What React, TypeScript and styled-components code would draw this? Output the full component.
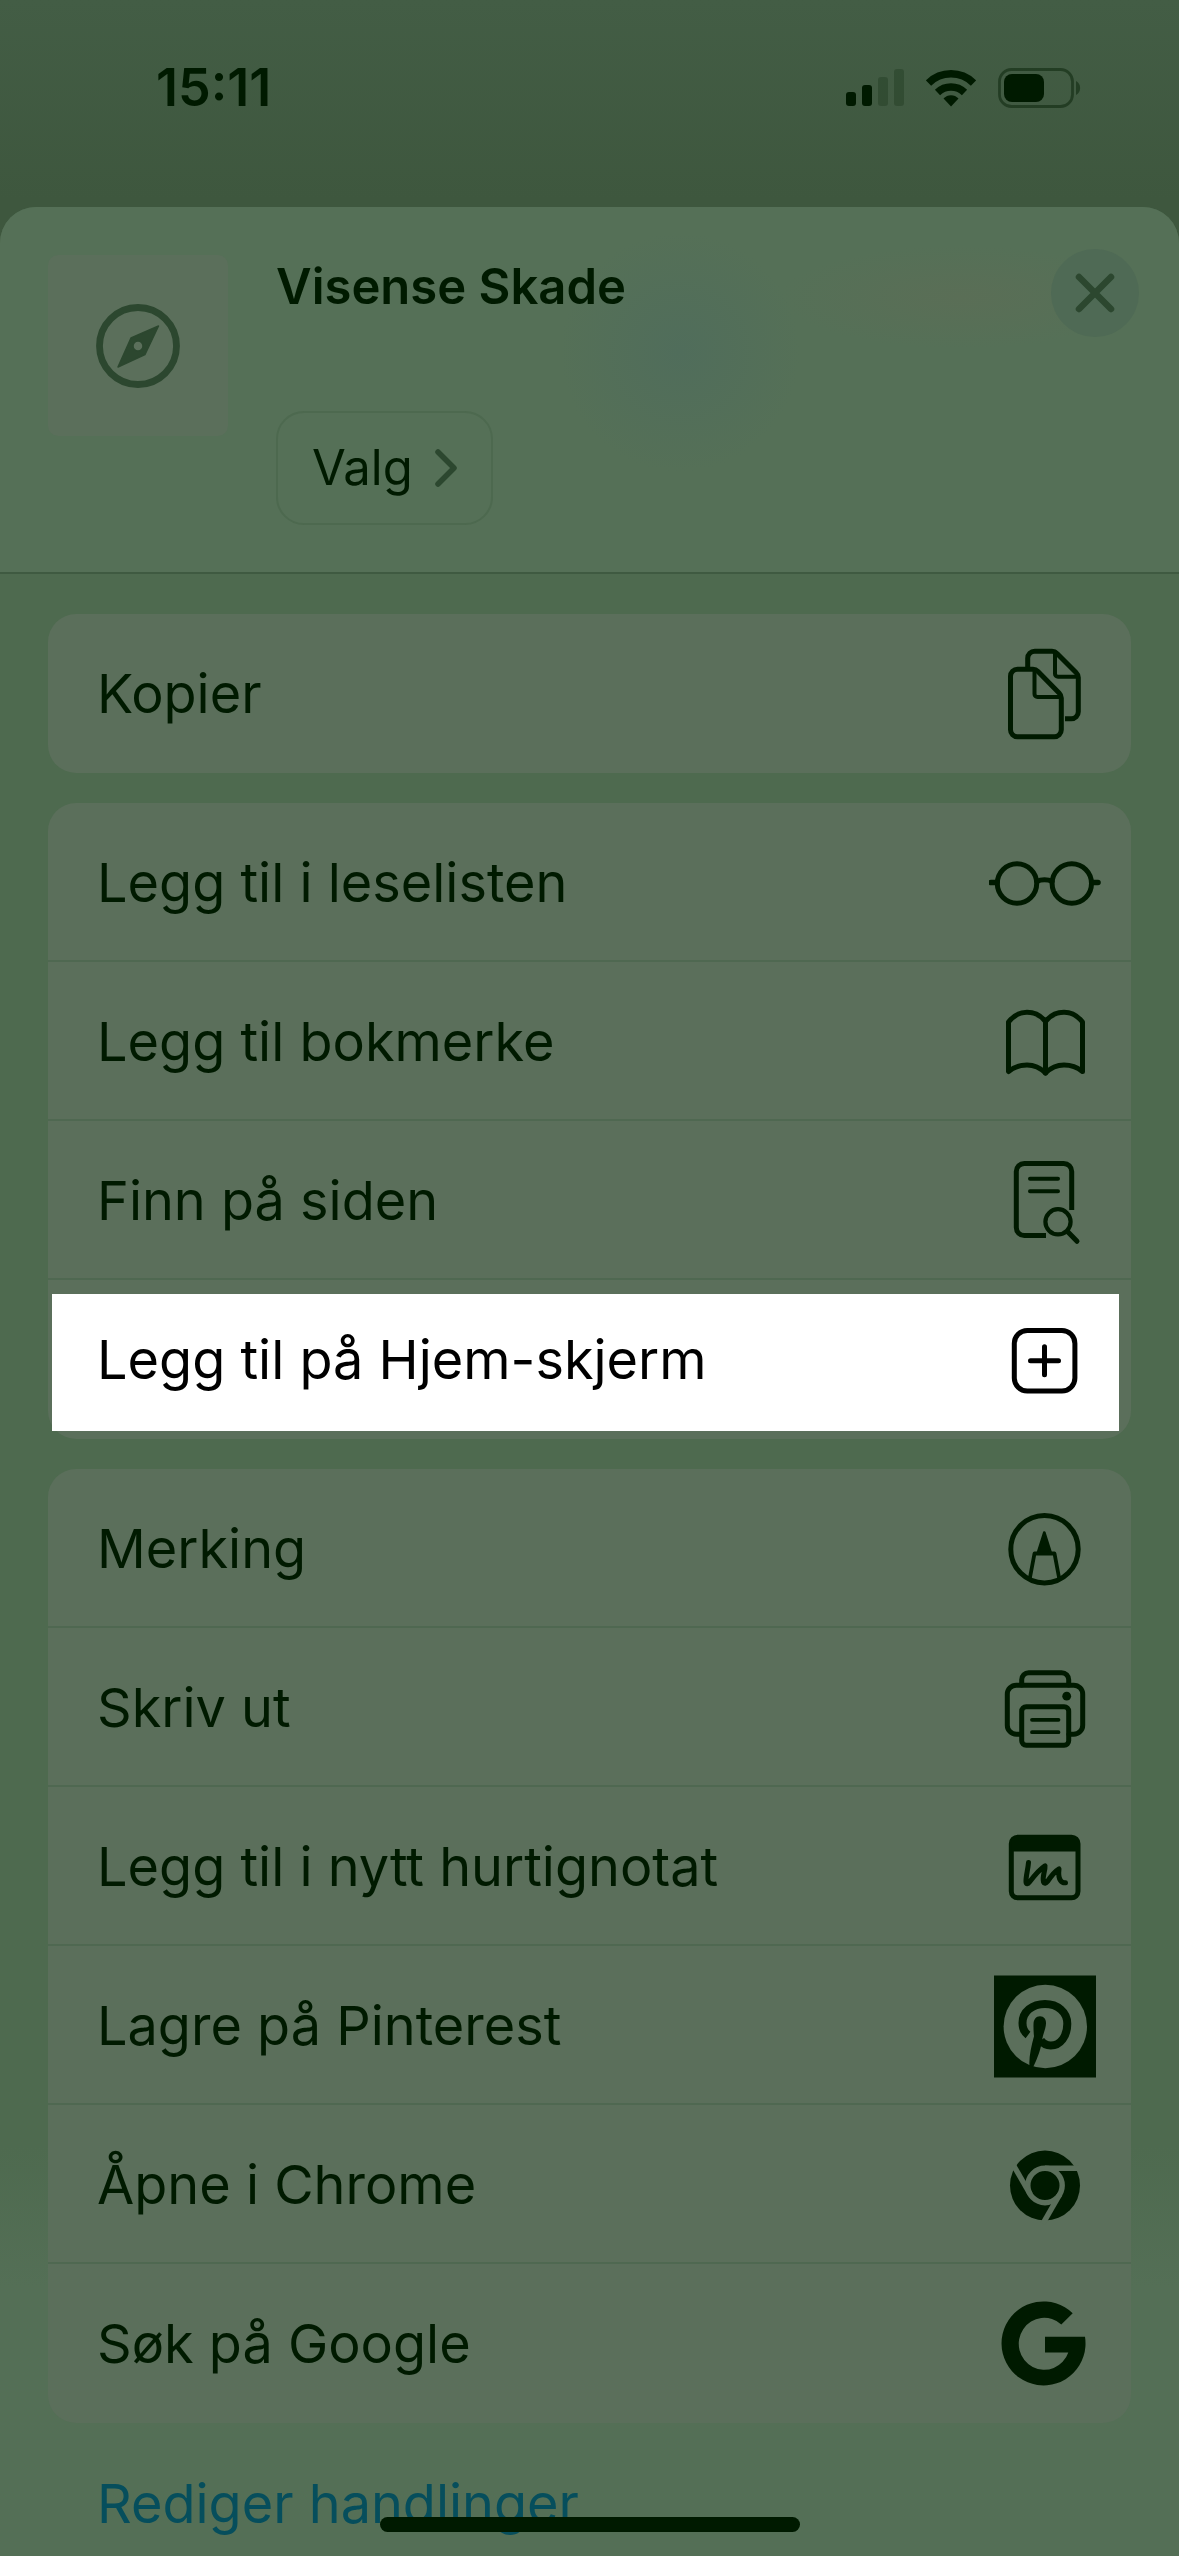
import React from "react";
import styled, { createGlobalStyle } from "styled-components";

const ink = "#001a00";
const card = "#5b6f5b";

const GlobalStyle = createGlobalStyle`
  *, *::before, *::after { box-sizing: border-box; }
  body {
    margin: 0;
    background: #546f55;
    color: ${ink};
    font-family: Inter, "Liberation Sans", sans-serif;
  }
  button {
    font: inherit;
    color: inherit;
    background: none;
    border: 0;
    margin: 0;
    padding: 0;
    cursor: pointer;
  }
`;

const Screen = styled.div`
  display: flex;
  flex-direction: column;
  height: 100vh;
  overflow: hidden;
  background: linear-gradient(#435d45, #3e573e 200px);
`;

const StatusBar = styled.div`
  flex: none;
  display: flex;
  align-items: center;
  justify-content: space-between;
  height: 207px;
  padding: 0 97px 32px 156px;
`;

const Clock = styled.time`
  font-size: 52px;
  line-height: 60px;
  font-weight: 600;
`;

const StatusIcons = styled.div`
  display: flex;
  align-items: center;
  gap: 22px;
`;

const Sheet = styled.main`
  flex: 1;
  display: flex;
  flex-direction: column;
  min-height: 0;
  overflow: hidden;
  border-radius: 36px 36px 0 0;
  background: linear-gradient(#4e6a4f, #4e6a4f 1940px, #546f56 2080px);
`;

const SheetHeader = styled.header`
  flex: none;
  display: flex;
  align-items: flex-start;
  gap: 48px;
  height: 367px;
  padding: 42px 40px 0 48px;
  border-bottom: 2px solid #3f5a41;
  background:
    radial-gradient(circle at 680px 145px, #506d5b, rgba(80, 110, 90, 0) 120px),
    radial-gradient(ellipse at 960px 90px, #5a6e56, rgba(90, 110, 86, 0) 180px),
    #557057;
`;

const Thumbnail = styled.div`
  display: grid;
  place-items: center;
  width: 180px;
  height: 181px;
  margin-top: 6px;
  border-radius: 10px;
  background: ${card};
  color: #2c472f;
`;

const HeaderText = styled.div`
  flex: 1;
  display: flex;
  flex-direction: column;
  align-items: flex-start;
  gap: 94px;
  padding-top: 8px;
`;

const Title = styled.h1`
  margin: 0;
  font-size: 49px;
  line-height: 60px;
  font-weight: 600;
`;

const OptionsButton = styled.button`
  display: flex;
  align-items: center;
  gap: 22px;
  height: 114px;
  padding: 0 34px;
  border: 2px solid #4d694f;
  border-radius: 28px;
  font-size: 49px;
  line-height: 60px;
`;

const CloseButton = styled.button`
  display: grid;
  place-items: center;
  width: 88px;
  height: 88px;
  border-radius: 50%;
  background: #4f6a55;
  color: #2c472f;
`;

const SheetBody = styled.div`
  flex: 1;
  display: flex;
  flex-direction: column;
  gap: 30px;
  padding: 40px 48px 0;
`;

const Group = styled.ul`
  flex: none;
  list-style: none;
  margin: 0;
  padding: 0;
  border-radius: 28px;
  background: ${card};
`;

const GroupItem = styled.li`
  &:not(:last-child) {
    box-shadow: inset 0 -2px #4f6851;
  }
`;

const Row = styled.button<{ $lit?: boolean }>`
  display: flex;
  align-items: center;
  justify-content: space-between;
  width: 100%;
  height: 159px;
  padding: 0 30px 0 49px;
  font-size: 54px;
  line-height: 66px;
  text-align: left;
  ${({ $lit }) =>
    $lit &&
    `
    color: #000;
    background: linear-gradient(#fff, #fff) 4px 14px / calc(100% - 16px) 137px no-repeat;
  `}
`;

const EditButton = styled.button`
  align-self: flex-start;
  margin-left: 49px;
  padding: 18px 0;
  color: #064e5c;
  font-size: 54px;
  line-height: 66px;
`;

const HomeIndicator = styled.div`
  position: fixed;
  left: 50%;
  bottom: 24px;
  width: 420px;
  height: 15px;
  margin-left: -210px;
  border-radius: 8px;
  background: ${ink};
`;

const Glyph = styled.svg`
  flex: none;
  display: block;
  fill: none;
  stroke: currentColor;
  stroke-width: 5;
  stroke-linecap: round;
  stroke-linejoin: round;
`;

const ActionGlyph = ({ children }: { children: React.ReactNode }) => (
  <Glyph width="112" height="112" viewBox="0 0 112 112" aria-hidden="true">
    {children}
  </Glyph>
);

const CopyIcon = () => (
  <ActionGlyph>
    <path d="M44 31.3H28.5a7 7 0 0 0-7 7v53.4a7 7 0 0 0 7 7h36.8a7 7 0 0 0 7-7V60c0-2-.8-3.6-2.2-5L49 33.5c-1.5-1.5-3-2.2-5-2.2z" />
    <path d="M45.5 32v24a3 3 0 0 0 3 3h23" strokeWidth="4" />
    <path d="M38.7 29V20.3a7 7 0 0 1 7-7H63c2 0 3.5.6 5 2.2L87 34.5c1.5 1.5 2.3 3 2.3 5v34.2a7 7 0 0 1-7 7H76" strokeLinecap="butt" />
    <path d="M66 14v21.7a3 3 0 0 0 3 3h20" strokeWidth="4" />
  </ActionGlyph>
);

const GlassesIcon = () => (
  <ActionGlyph>
    <circle cx="28" cy="56.5" r="19.7" />
    <circle cx="82.8" cy="56.5" r="19.7" />
    <path d="M48 54.5c4-2.2 11-2.2 15 0" />
    <path d="M2 55.5h6M103 55.5h6" strokeWidth="5.6" />
  </ActionGlyph>
);

const BookIcon = () => (
  <ActionGlyph>
    <path d="M19.5 85.5V36C25 29 31 26.200 38 26.200S51.500 29 56.500 35.500C61.500 29 68 26.200 75 26.200S88 29 93.500 36v49.500C88 81 82 79 75 79s-13 2.500-18.500 8C51 81.500 45 79 38 79s-13 2-18.500 6.500z" />
    <path d="M56.5 35.5V87" />
  </ActionGlyph>
);

const FindIcon = () => (
  <ActionGlyph>
    <path d="M82.7 65V26.5a8 8 0 0 0-8-8H35.3a8 8 0 0 0-8 8v56a8 8 0 0 0 8 8H57" strokeLinecap="butt" />
    <path d="M41 33.8h28M41 46.2h28" strokeWidth="4" />
    <circle cx="69" cy="76.8" r="12.6" strokeWidth="4.2" />
    <path d="M78.5 86.5l9.5 9.8" strokeWidth="5" />
  </ActionGlyph>
);

const AddIcon = () => (
  <ActionGlyph>
    <rect x="25.3" y="26.5" width="60.6" height="60.6" rx="13" />
    <path d="M41.5 56.7h28M55.5 42.7v28" />
  </ActionGlyph>
);

const MarkupIcon = () => (
  <ActionGlyph>
    <circle cx="55.5" cy="56.2" r="33.7" />
    <path d="M55.3 39.5l-6.5 20.5h13z" fill="currentColor" strokeWidth="2.6" />
    <path d="M40.8 85.5l4.7-25h20l4.7 25" strokeWidth="3.8" />
  </ActionGlyph>
);

const PrintIcon = () => (
  <ActionGlyph>
    <path d="M32 82.2h-4.7a9 9 0 0 1-9-9V42.2a9 9 0 0 1 9-9h57.4a9 9 0 0 1 9 9v31a9 9 0 0 1-9 9H80" />
    <path d="M32.7 33v-5.2a7 7 0 0 1 7-7h33a7 7 0 0 1 7 7V33" />
    <rect x="32.7" y="54.8" width="47" height="38.4" rx="4.5" />
    <path d="M43 67.8h26.5M43 80.2h26.5" strokeWidth="3.8" />
    <circle cx="77.7" cy="44.2" r="4.4" fill="currentColor" stroke="none" />
  </ActionGlyph>
);

const QuickNoteIcon = () => (
  <ActionGlyph>
    <rect x="22.3" y="26.2" width="66.7" height="60.6" rx="6.5" />
    <path d="M22.3 36H89" strokeWidth="9" strokeLinecap="butt" />
    <path d="M22.3 31H89" strokeWidth="8" strokeLinecap="butt" />
    <path d="M39.5 51.5c-.5 7-2.8 14-2.5 19.5.2 2.5 2 2 3.5 0C45 65 51 58 56 54.8c.5 5-3 10-1.5 16.2.8 2 2.5 1.5 4-.5 3-4.5 6.5-9.5 11.5-12.500-.5 4.500-1 8 1.500 11.500 1.300 1.800 3 2.500 5 2.300" />
  </ActionGlyph>
);

const PinterestIcon = () => (
  <ActionGlyph>
    <path d="M5 5.5h102v102H5z" fill="currentColor" stroke="none" />
    <circle cx="56.3" cy="56.5" r="41.7" fill={card} stroke="none" />
    <path d="M39 65c-4-3-5.5-7-5.5-12C33.5 41.5 43.5 34 56 34s22.3 8 22.3 19.8c0 12.5-7 21.7-16.5 21.7-4 0-7.5-1.5-10-5.2" strokeWidth="8" strokeLinecap="butt" />
    <path d="M44.5 54.5c0-5 2.5-8.2 6.5-8.2s6 3 6 7c0 5-3 10.5-3.8 16-1 9-4.7 19-8.7 27-1 1.5-3.5 1.5-4 0-.8-8 1.5-19 4.5-30-.4-4-.6-8-.5-11.8z" fill="currentColor" stroke="none" />
  </ActionGlyph>
);

const ChromeIcon = () => (
  <ActionGlyph>
    <circle cx="56" cy="56.5" r="35" fill="currentColor" stroke="none" />
    <g stroke={card} strokeWidth="5.4" strokeLinecap="butt">
      <circle cx="56" cy="56.5" r="17.2" />
      {[0, 120, 240].map((turn) => (
        <path key={turn} d="M56 39.3H90" transform={`rotate(${turn} 56 56.5)`} />
      ))}
    </g>
  </ActionGlyph>
);

const GoogleIcon = () => (
  <ActionGlyph>
    <path
      d="M83.7 25.2L72.3 36.5A25.5 26 0 1 0 79.3 64.5H56V48.8H96A42 42 0 1 1 83.7 25.2z"
      fill="currentColor"
      stroke="none"
    />
  </ActionGlyph>
);

type Action = { label: string; Icon: () => React.JSX.Element; lit?: boolean };

const groups: Action[][] = [
  [{ label: "Kopier", Icon: CopyIcon }],
  [
    { label: "Legg til i leselisten", Icon: GlassesIcon },
    { label: "Legg til bokmerke", Icon: BookIcon },
    { label: "Finn på siden", Icon: FindIcon },
    { label: "Legg til på Hjem-skjerm", Icon: AddIcon, lit: true },
  ],
  [
    { label: "Merking", Icon: MarkupIcon },
    { label: "Skriv ut", Icon: PrintIcon },
    { label: "Legg til i nytt hurtignotat", Icon: QuickNoteIcon },
    { label: "Lagre på Pinterest", Icon: PinterestIcon },
    { label: "Åpne i Chrome", Icon: ChromeIcon },
    { label: "Søk på Google", Icon: GoogleIcon },
  ],
];

export default function App() {
  return (
    <Screen>
      <GlobalStyle />
      <StatusBar>
        <Clock>15:11</Clock>
        <StatusIcons>
          <Glyph width="58" height="38" viewBox="0 0 58 38" aria-hidden="true">
            <g fill="currentColor" stroke="none">
              <rect x="0" y="23" width="10" height="14" rx="3" />
              <rect x="16" y="16" width="10" height="21" rx="3" />
              <rect x="32" y="8" width="10" height="29" rx="3" opacity=".22" />
              <rect x="48" y="0" width="10" height="37" rx="3" opacity=".22" />
            </g>
          </Glyph>
          <Glyph width="50" height="38" viewBox="0 0 50 38" aria-hidden="true">
            <g strokeWidth="7.5" strokeLinecap="butt">
              <path d="M2.5 14A32 32 0 0 1 47.5 14" />
              <path d="M11.5 23.5A19.5 19.5 0 0 1 38.5 23.5" />
            </g>
            <path d="M25 37.5l-7.5-8c4-4.5 11-4.5 15 0z" fill="currentColor" stroke="none" />
          </Glyph>
          <Glyph width="84" height="40" viewBox="0 0 84 40" aria-hidden="true">
            <rect x="1.5" y="1.5" width="73" height="37" rx="12" strokeWidth="2.8" opacity=".45" />
            <rect x="6" y="6" width="40" height="28" rx="8" fill="currentColor" stroke="none" />
            <path d="M78 13c5.5 2.5 5.5 11.5 0 14z" fill="currentColor" stroke="none" opacity=".45" />
          </Glyph>
        </StatusIcons>
      </StatusBar>
      <Sheet>
        <SheetHeader>
          <Thumbnail>
            <Glyph width="84" height="84" viewBox="0 0 84 84" aria-hidden="true">
              <circle cx="42" cy="42" r="38.5" strokeWidth="6.8" />
              <path
                d="M62.5 22L49 50.5 22 63 35 34z M42 37a5 5 0 1 0 0 10 5 5 0 1 0 0-10z"
                fill="currentColor"
                fillRule="evenodd"
                strokeWidth="1.5"
              />
            </Glyph>
          </Thumbnail>
          <HeaderText>
            <Title>Visense Skade</Title>
            <OptionsButton type="button">
              Valg
              <Glyph width="22" height="38" viewBox="0 0 22 38" aria-hidden="true">
                <path d="M3 3l16 16L3 35" stroke="#2c472f" strokeWidth="5.5" />
              </Glyph>
            </OptionsButton>
          </HeaderText>
          <CloseButton type="button" aria-label="Lukk">
            <Glyph width="40" height="40" viewBox="0 0 40 40" aria-hidden="true">
              <path d="M4 4l32 32M36 4L4 36" strokeWidth="6.5" />
            </Glyph>
          </CloseButton>
        </SheetHeader>
        <SheetBody>
          {groups.map((actions) => (
            <Group key={actions[0].label}>
              {actions.map(({ label, Icon, lit }) => (
                <GroupItem key={label}>
                  <Row type="button" $lit={lit}>
                    {label}
                    <Icon />
                  </Row>
                </GroupItem>
              ))}
            </Group>
          ))}
          <EditButton type="button">Rediger handlinger</EditButton>
        </SheetBody>
      </Sheet>
      <HomeIndicator />
    </Screen>
  );
}
